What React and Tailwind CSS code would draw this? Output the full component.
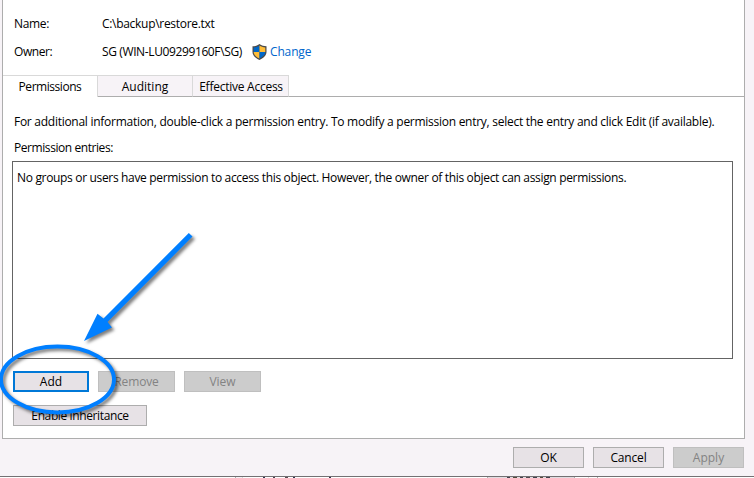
import React from "react";

const button =
  "flex h-[21px] items-center justify-center border border-[#adadad] bg-[#e7e2e6] whitespace-nowrap";
const disabled =
  "flex h-[21px] items-center justify-center border border-[#bfbfbf] bg-[#cccccc] text-[#838383] whitespace-nowrap";

function Shield() {
  return (
    <svg width="15" height="16" viewBox="0 0 15 16" className="shrink-0">
      <path d="M7.5 0 C9.5 1.500 12 2.200 14.500 2.300 V8 C14.500 11.800 11 14.300 7.500 16 C4 14.300 .5 11.800 .5 8 V2.300 C3 2.200 5.500 1.500 7.500 0Z" fill="#4a4a4a" />
      <path d="M7.500 1.400 V8 H1.700 V3.400 C4 3.200 6 2.500 7.500 1.400Z" fill="#0067c8" />
      <path d="M7.500 1.400 V8 H13.300 V3.400 C11 3.200 9 2.500 7.500 1.400Z" fill="#ffbd38" />
      <path d="M7.500 14.600 V8 H1.700 C1.700 11 4.500 13 7.500 14.600Z" fill="#ffbd38" />
      <path d="M7.500 14.600 V8 H13.300 C13.300 11 10.500 13 7.500 14.600Z" fill="#0067c8" />
    </svg>
  );
}

function Annotation() {
  return (
    <svg className="pointer-events-none absolute left-0 top-0" width="754" height="478" viewBox="0 0 754 478">
      <defs>
        <filter id="shadow" x="-20%" y="-20%" width="140%" height="140%" colorInterpolationFilters="sRGB">
          <feDropShadow dx="2.500" dy="2.500" stdDeviation="1.600" floodColor="#000" floodOpacity=".5" />
        </filter>
      </defs>
      <g filter="url(#shadow)">
        <path d="M188.800 233 L192.500 236.600 L107.600 322 L112 327.400 L84 341 L97.500 313.800 L103.500 318.500Z" fill="#007fff" />
      </g>
      <ellipse cx="57.500" cy="379.500" rx="56.500" ry="33" fill="none" stroke="#007fff" strokeWidth="4" filter="url(#shadow)" />
    </svg>
  );
}

// One-pixel sliver of the window that lies behind the dialog
function WindowBehind() {
  return (
    <div className="flex h-px shrink-0 bg-white">
      <span className="ml-[235px] w-px bg-[#adadad]" />
      <span className="w-[6px] bg-[#f7f3f7]" />
      <span className="w-px bg-[#d9d9d9]" />
      <span className="ml-[20px] w-[2px] bg-[#30304a]" />
      <span className="ml-[8px] w-[2px] bg-[#4a3a4a]" />
      <span className="ml-[10px] w-[3px] bg-[#5a4a50]" />
      <span className="ml-[5px] w-[2px] bg-[#30304a]" />
      <span className="ml-[34px] w-[2px] bg-[#30304a]" />
      <span className="ml-[156px] w-px bg-[#adadad]" />
      <span className="flex w-[86px] gap-[3px] bg-[#e1dde1] pl-[19px]">
        <i className="w-[3px] bg-[#40404a]" />
        <i className="w-[4px] bg-[#50483a]" />
        <i className="w-[3px] bg-[#40404a]" />
        <i className="w-[4px] bg-[#504a50]" />
        <i className="w-[4px] bg-[#40404a]" />
        <i className="w-[3px] bg-[#50483a]" />
        <i className="w-[4px] bg-[#40404a]" />
      </span>
      <span className="w-px bg-[#adadad]" />
      <span className="ml-[13px] w-px bg-[#d9d9d9]" />
      <span className="ml-[8px] w-px bg-[#adadad]" />
    </div>
  );
}

export default function App() {
  return (
    <div className="relative flex h-[478px] w-[754px] flex-col overflow-hidden bg-[#f7f3f7] font-['Open_Sans','Noto_Sans',sans-serif] text-[12px] leading-4 text-black">
      <main className="ml-[2px] flex h-[439px] w-[743px] shrink-0 flex-col border border-t-0 border-[#adadad] bg-white">
        <div className="flex h-[75px] flex-col gap-3 pl-[11px] pt-4">
          <div className="flex">
            <span className="w-[88px] tracking-[-0.35px]">Name:</span>
            <span className="tracking-[-0.3px]">C:\backup\restore.txt</span>
          </div>
          <div className="flex">
            <span className="w-[88px] tracking-[-0.45px]">Owner:</span>
            <span className="w-[150px] whitespace-nowrap tracking-[-0.38px]">SG (WIN-LU09299160F\SG)</span>
            <Shield />
            <span className="ml-[3px] tracking-[-0.15px] text-[#0066cc]">Change</span>
          </div>
        </div>
        <nav className="flex h-[22px] shrink-0">
          <div className="flex w-[95px] items-center justify-center border-r border-t border-[#d9d9d9] bg-white tracking-[-0.45px]">Permissions</div>
          <div className="flex w-[95px] items-center justify-center border-b border-r border-t border-b-[#adadad] border-r-[#d9d9d9] border-t-[#d9d9d9] bg-[#f7f3f7] pt-px">Auditing</div>
          <div className="flex w-[96px] items-center justify-center whitespace-nowrap border-b border-r border-t border-b-[#adadad] border-r-[#d9d9d9] border-t-[#d9d9d9] bg-[#f7f3f7] pl-px pt-px tracking-[-0.25px]">Effective Access</div>
          <div className="flex-1 border-b border-[#adadad]" />
        </nav>
        <section className="flex flex-col pl-[10px] pt-[17px]">
          <p className="ml-px whitespace-nowrap tracking-[-0.27px]">For additional information, double-click a permission entry. To modify a permission entry, select the entry and click Edit (if available).</p>
          <p className="ml-px mt-[10px] tracking-[-0.43px]">Permission entries:</p>
          <div className="-ml-px mt-[5px] h-[198px] w-[721px] whitespace-nowrap border border-[#646464] pl-1 pt-2 tracking-[-0.33px]">
            No groups or users have permission to access this object. However, the owner of this object can assign permissions.
          </div>
          <div className="mt-3 flex">
            <button className="flex h-[21px] w-[76px] items-center justify-center border-2 border-[#0078d7] bg-[#e7e2e6]">Add</button>
            <button className={disabled + " ml-[9px] w-[77px] tracking-[-0.15px]"}>Remove</button>
            <button className={disabled + " ml-[9px] w-[77px]"}>View</button>
          </div>
          <button className={button + " mt-[13px] w-[134px] tracking-[-0.38px]"}>Enable inheritance</button>
        </section>
      </main>
      <footer className="flex h-[37px] shrink-0 justify-end gap-[9px] pr-[10px] pt-2">
        <button className={button + " w-[71px]"}>OK</button>
        <button className={button + " w-[71px] tracking-[-0.15px]"}>Cancel</button>
        <button className={disabled + " w-[71px]"}>Apply</button>
      </footer>
      <div className="h-px shrink-0 bg-[#737073]" />
      <WindowBehind />
      <Annotation />
    </div>
  );
}
